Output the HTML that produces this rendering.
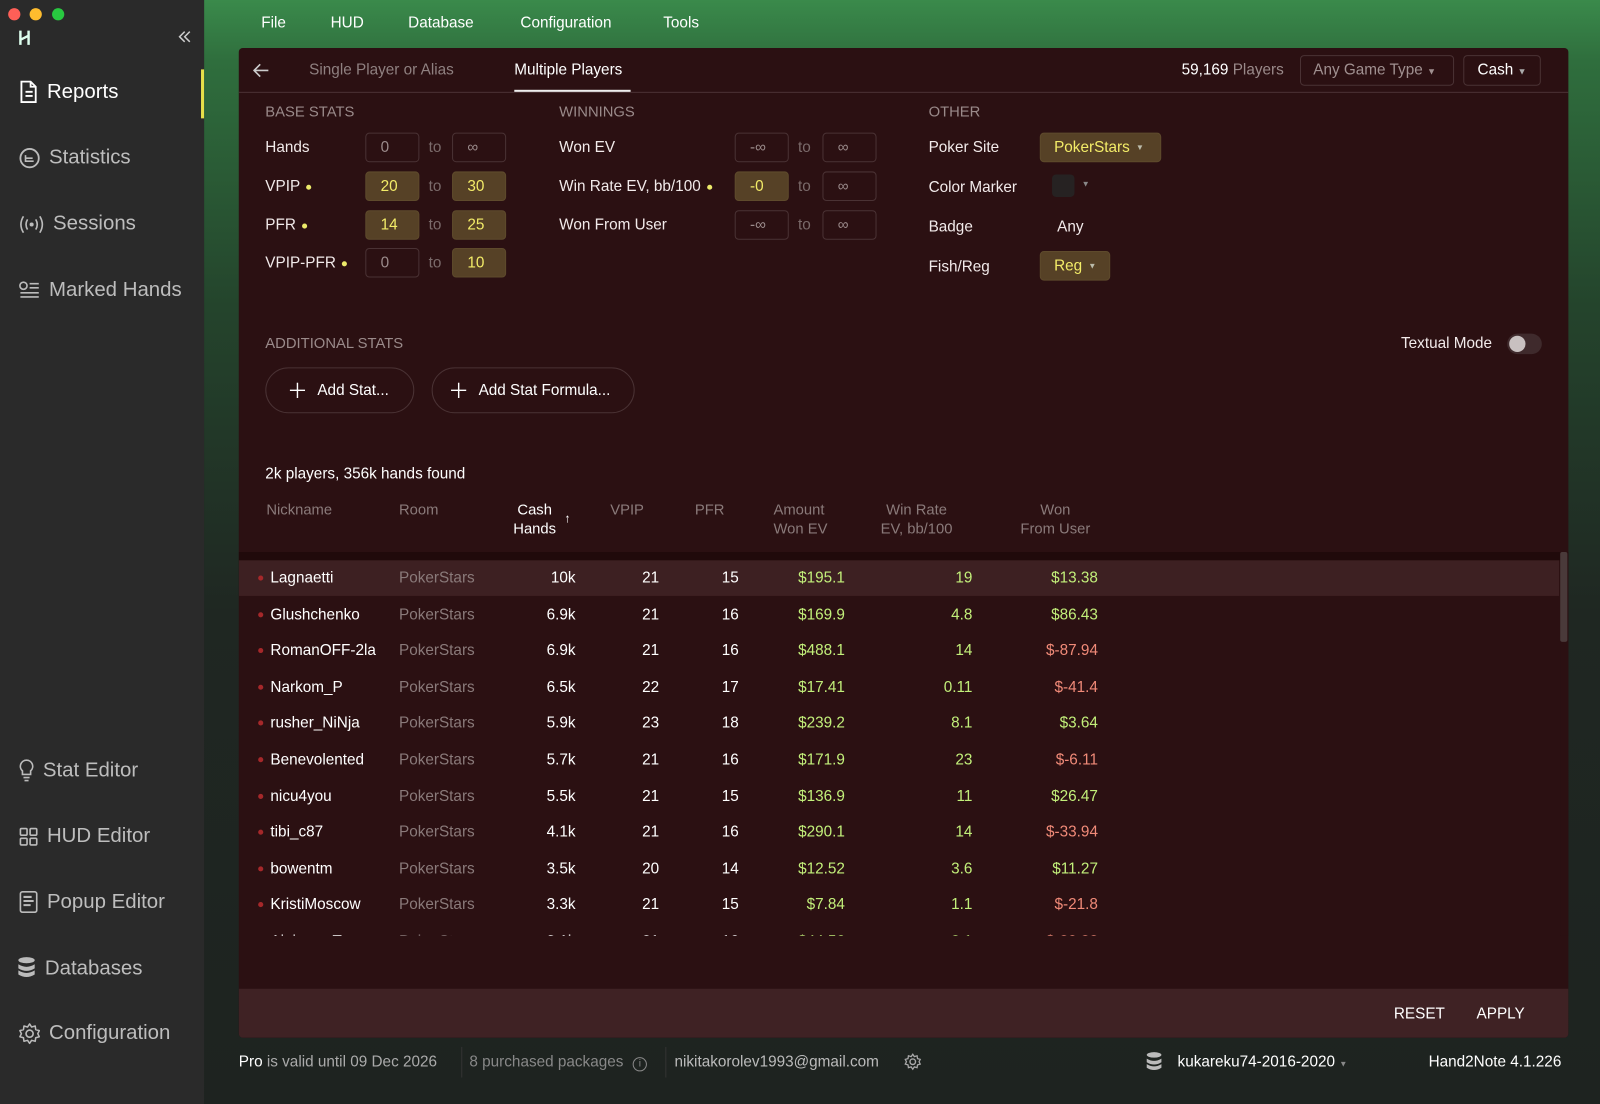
<!DOCTYPE html>
<html><head><meta charset="utf-8">
<style>
*{margin:0;padding:0;box-sizing:border-box}
body{width:1600px;height:1082px;overflow:hidden;font-family:"Liberation Sans",sans-serif;background:#1e2320;position:relative;color:#fff}
#wrap{position:absolute;left:0;top:0;width:1568px;height:1060px;transform:scale(1.020408);transform-origin:0 0}
.abs{position:absolute;white-space:nowrap}
#side{position:absolute;left:0;top:0;width:200px;height:1082px;background:#2a2a2a}
#topbg{position:absolute;left:200px;top:0;width:1400px;height:1082px;background:linear-gradient(180deg,#3a8a4b 0px,#2f6e3d 60px,#24442c 300px,#1f2722 600px,#1e2320 1082px)}
.nav{position:absolute;left:18px;font-size:20px;color:#bdbdbd;display:flex;align-items:center;gap:8px}
.nav svg{flex:none}
#panel{position:absolute;left:234px;top:47px;width:1303px;height:970px;background:#2b1012;border-radius:4px;overflow:hidden}
.lbl{font-size:15px;color:#f2eaea}
.sec{font-size:14.5px;color:#9a8a8a}
.box{position:absolute;height:29px;border:1px solid #4a3234;border-radius:4px;font-size:15px;color:#9b8b8b;display:flex;align-items:center;padding-left:14px}
.box.y{background:#564126;border-color:#5e4a2c;color:#f3ec68}
.to{position:absolute;font-size:15px;color:#7a6a6a}
.dot{display:inline-block;width:5px;height:5px;border-radius:50%;background:#ecea6a;margin-left:6px;vertical-align:middle}
.th{position:absolute;font-size:14.5px;color:#8a7a7a;line-height:19px}
.row{position:absolute;left:0;width:1294px;height:35px;font-size:15px}
.row span{position:absolute;top:9px}
.g{color:#c2ef7a}.r{color:#f08a78}
.menu{position:absolute;top:14px;font-size:15px;color:#fff}
.btn{position:absolute;top:313px;height:45px;border:1px solid #4a3234;border-radius:23px;font-size:15px;display:flex;align-items:center;gap:12px}
</style></head><body>
<div id="wrap">
<div id="topbg"></div>
<div id="side">
  <div class="abs" style="left:8px;top:8px;width:12px;height:12px;border-radius:50%;background:#fe5f57"></div>
  <div class="abs" style="left:29px;top:8px;width:12px;height:12px;border-radius:50%;background:#febc2e"></div>
  <div class="abs" style="left:51px;top:8px;width:12px;height:12px;border-radius:50%;background:#28c840"></div>
  <svg class="abs" style="left:18px;top:29px" width="12" height="16" viewBox="0 0 12 16"><path d="M2 1v14M10 1v14M2 10l8-4" stroke="#dfe" stroke-width="2.4" fill="none"/></svg>
  <svg class="abs" style="left:174px;top:30px" width="14" height="12" viewBox="0 0 14 12"><path d="M7 1L2 6l5 5M12 1L7 6l5 5" stroke="#ccc" stroke-width="1.5" fill="none"/></svg>
  <div class="abs" style="left:197px;top:68px;width:3px;height:48px;background:#e6e04a"></div>
  <div class="nav" style="top:78px;color:#fff"><svg width="20" height="24" viewBox="0 0 20 24"><path d="M3 2h9l5 5v15H3z M12 2v5h5 M7 12h7 M7 16h7" stroke="#fff" stroke-width="1.8" fill="none"/></svg>Reports</div>
  <div class="nav" style="top:143px"><svg width="22" height="22" viewBox="0 0 22 22"><circle cx="11" cy="11" r="9" stroke="#bbb" stroke-width="1.8" fill="none"/><path d="M7 8v6h8M7 11h7" stroke="#bbb" stroke-width="1.6" fill="none"/></svg>Statistics</div>
  <div class="nav" style="top:208px"><svg width="26" height="20" viewBox="0 0 26 20"><circle cx="13" cy="10" r="2" fill="#bbb"/><path d="M9 5q-3 5 0 10M17 5q3 5 0 10M5 2q-5 8 0 16M21 2q5 8 0 16" stroke="#bbb" stroke-width="1.6" fill="none"/></svg>Sessions</div>
  <div class="nav" style="top:273px"><svg width="22" height="20" viewBox="0 0 22 20"><circle cx="5" cy="5" r="3.5" stroke="#bbb" stroke-width="1.6" fill="none"/><path d="M11 3h9M11 7h9M2 12h18M2 16h18" stroke="#bbb" stroke-width="1.6"/></svg>Marked Hands</div>
  <div class="nav" style="top:743px"><svg width="16" height="24" viewBox="0 0 16 24"><path d="M8 2a6 6 0 0 0-4 10.5V16h8v-3.5A6 6 0 0 0 8 2zM5 19h6M6 22h4" stroke="#bbb" stroke-width="1.6" fill="none"/></svg>Stat Editor</div>
  <div class="nav" style="top:808px"><svg width="20" height="20" viewBox="0 0 20 20"><rect x="2" y="2" width="6.5" height="6.5" rx="1" stroke="#bbb" stroke-width="1.6" fill="none"/><rect x="11.5" y="2" width="6.5" height="6.5" rx="1" stroke="#bbb" stroke-width="1.6" fill="none"/><rect x="2" y="11.5" width="6.5" height="6.5" rx="1" stroke="#bbb" stroke-width="1.6" fill="none"/><rect x="11.5" y="11.5" width="6.5" height="6.5" rx="1" stroke="#bbb" stroke-width="1.6" fill="none"/></svg>HUD Editor</div>
  <div class="nav" style="top:872px"><svg width="20" height="24" viewBox="0 0 20 24"><rect x="2" y="2" width="16" height="20" rx="2" stroke="#bbb" stroke-width="1.6" fill="none"/><path d="M5 7h8M5 11h10M5 15h7" stroke="#bbb" stroke-width="2"/></svg>Popup Editor</div>
  <div class="nav" style="top:937px;left:16px"><svg width="20" height="24" viewBox="0 0 20 24"><ellipse cx="10" cy="4" rx="8" ry="3" fill="#bbb"/><path d="M2 8q8 5 16 0v4q-8 5-16 0zM2 14q8 5 16 0v4q-8 5-16 0z" fill="#bbb"/></svg>Databases</div>
  <div class="nav" style="top:1001px"><svg width="22" height="22" viewBox="0 0 22 22"><circle cx="11" cy="11" r="3.5" stroke="#bbb" stroke-width="1.6" fill="none"/><path d="M11 1.5l2 3 3.5-1 .5 3.5 3.5 1-1.5 3 1.5 3-3.5 1-.5 3.5-3.5-1-2 3-2-3-3.5 1-.5-3.5-3.5-1 1.5-3-1.5-3 3.5-1 .5-3.5 3.5 1z" stroke="#bbb" stroke-width="1.5" fill="none" stroke-linejoin="round"/></svg>Configuration</div>
</div>
<div class="menu" style="left:256px">File</div>
<div class="menu" style="left:324px">HUD</div>
<div class="menu" style="left:400px">Database</div>
<div class="menu" style="left:510px">Configuration</div>
<div class="menu" style="left:650px">Tools</div>

<div id="panel">
  <div class="abs" style="left:0;top:43px;width:1303px;height:1px;background:#4a3234"></div>
  <svg class="abs" style="left:14px;top:15px" width="16" height="14" viewBox="0 0 16 14"><path d="M15 7H2M7 1L1 7l6 6" stroke="#ccc" stroke-width="1.6" fill="none"/></svg>
  <div class="abs" style="left:69px;top:13px;font-size:15px;color:#8f8080">Single Player or Alias</div>
  <div class="abs" style="left:270px;top:13px;font-size:15px;color:#fff">Multiple Players</div>
  <div class="abs" style="left:270px;top:41px;width:114px;height:2px;background:#eee"></div>
  <div class="abs" style="left:924px;top:13px;font-size:15px"><span style="color:#fff">59,169</span> <span style="color:#9a8a8a">Players</span></div>
  <div class="abs" style="left:1040px;top:7px;width:151px;height:30px;border:1px solid #4a3234;border-radius:4px;font-size:15px;color:#a09090;padding:5px 0 0 12px">Any Game Type <span style="font-size:9px">▼</span></div>
  <div class="abs" style="left:1200px;top:7px;width:76px;height:30px;border:1px solid #4a3234;border-radius:4px;font-size:15px;color:#fff;padding:5px 0 0 13px">Cash <span style="font-size:9px;color:#aaa">▼</span></div>

  <div class="abs sec" style="left:26px;top:55px">BASE STATS</div>
  <div class="abs sec" style="left:314px;top:55px">WINNINGS</div>
  <div class="abs sec" style="left:676px;top:55px">OTHER</div>

  <div class="abs lbl" style="left:26px;top:89px">Hands</div>
  <div class="abs lbl" style="left:26px;top:127px">VPIP<span class="dot"></span></div>
  <div class="abs lbl" style="left:26px;top:165px">PFR<span class="dot"></span></div>
  <div class="abs lbl" style="left:26px;top:202px">VPIP-PFR<span class="dot"></span></div>
  <div class="box" style="left:124px;top:83px;width:53px">0</div><div class="to" style="left:186px;top:89px">to</div><div class="box" style="left:209px;top:83px;width:53px">∞</div>
  <div class="box y" style="left:124px;top:121px;width:53px">20</div><div class="to" style="left:186px;top:127px">to</div><div class="box y" style="left:209px;top:121px;width:53px">30</div>
  <div class="box y" style="left:124px;top:159px;width:53px">14</div><div class="to" style="left:186px;top:165px">to</div><div class="box y" style="left:209px;top:159px;width:53px">25</div>
  <div class="box" style="left:124px;top:196px;width:53px">0</div><div class="to" style="left:186px;top:202px">to</div><div class="box y" style="left:209px;top:196px;width:53px">10</div>

  <div class="abs lbl" style="left:314px;top:89px">Won EV</div>
  <div class="abs lbl" style="left:314px;top:127px">Win Rate EV, bb/100<span class="dot"></span></div>
  <div class="abs lbl" style="left:314px;top:165px">Won From User</div>
  <div class="box" style="left:486px;top:83px;width:53px">-∞</div><div class="to" style="left:548px;top:89px">to</div><div class="box" style="left:572px;top:83px;width:53px">∞</div>
  <div class="box y" style="left:486px;top:121px;width:53px">-0</div><div class="to" style="left:548px;top:127px">to</div><div class="box" style="left:572px;top:121px;width:53px">∞</div>
  <div class="box" style="left:486px;top:159px;width:53px">-∞</div><div class="to" style="left:548px;top:165px">to</div><div class="box" style="left:572px;top:159px;width:53px">∞</div>

  <div class="abs lbl" style="left:676px;top:89px">Poker Site</div>
  <div class="abs lbl" style="left:676px;top:128px">Color Marker</div>
  <div class="abs lbl" style="left:676px;top:167px">Badge</div>
  <div class="abs lbl" style="left:676px;top:206px">Fish/Reg</div>
  <div class="box y" style="left:785px;top:83px;width:119px;padding-left:13px">PokerStars <span style="font-size:8px;color:#bba;margin-left:6px">▼</span></div>
  <div class="abs" style="left:797px;top:124px;width:22px;height:22px;border-radius:4px;background:#262222"></div>
  <div class="abs" style="left:826px;top:129px;font-size:8px;color:#888">▼</div>
  <div class="abs lbl" style="left:802px;top:167px">Any</div>
  <div class="box y" style="left:785px;top:199px;width:69px;padding-left:13px">Reg <span style="font-size:8px;color:#bba;margin-left:6px">▼</span></div>

  <div class="abs sec" style="left:26px;top:282px">ADDITIONAL STATS</div>
  <div class="abs lbl" style="left:1139px;top:281px">Textual Mode</div>
  <div class="abs" style="left:1243px;top:280px;width:34px;height:20px;border-radius:10px;background:#3f2a2c"></div>
  <div class="abs" style="left:1245px;top:282px;width:16px;height:16px;border-radius:50%;background:#c8c0c0"></div>
  <div class="btn" style="left:26px;width:146px;padding-left:23px"><svg width="15" height="15" viewBox="0 0 15 15"><path d="M7.5 0v15M0 7.5h15" stroke="#fff" stroke-width="1.4"/></svg>Add Stat...</div>
  <div class="btn" style="left:189px;width:199px;padding-left:18px"><svg width="15" height="15" viewBox="0 0 15 15"><path d="M7.5 0v15M0 7.5h15" stroke="#fff" stroke-width="1.4"/></svg>Add Stat Formula...</div>

  <div class="abs" style="left:26px;top:409px;font-size:15px">2k players, 356k hands found</div>
  <div class="th" style="left:27px;top:444px">Nickname</div>
  <div class="th" style="left:157px;top:444px">Room</div>
  <div class="th" style="left:269px;top:444px;color:#fff;text-align:center">Cash<br>Hands</div>
  <div class="abs" style="left:319px;top:454px;font-size:12px">↑</div>
  <div class="th" style="left:364px;top:444px">VPIP</div>
  <div class="th" style="left:447px;top:444px">PFR</div>
  <div class="th" style="left:524px;top:444px">Amount<br>Won EV</div>
  <div class="th" style="left:629px;top:444px;text-align:center">Win Rate<br>EV, bb/100</div>
  <div class="th" style="left:766px;top:444px;text-align:center">Won<br>From User</div>
  <div class="abs" style="left:0;top:494px;width:1303px;height:8px;background:#200a0b"></div>
  <div class="abs" style="left:1295px;top:494px;width:8px;height:376px;background:#2b1012"></div>
  <div class="abs" style="left:1295px;top:494px;width:7px;height:88px;background:#4a3a3a;border-radius:2px"></div>
  <div id="rows" class="abs" style="left:0;top:502px;width:1294px;height:368px;overflow:hidden"></div>

  <div class="abs" style="left:0;top:922px;width:1303px;height:48px;background:#3f2224"></div>
  <div class="abs" style="left:1132px;top:938px;font-size:15px">RESET</div>
  <div class="abs" style="left:1213px;top:938px;font-size:15px">APPLY</div>
</div>

<div class="abs" style="left:234px;top:1032px;font-size:15px;color:#fff">Pro <span style="color:#aaa">is valid until 09 Dec 2026</span></div>
<div class="abs" style="left:452px;top:1026px;width:1px;height:30px;background:#333"></div>
<div class="abs" style="left:460px;top:1032px;font-size:15px;color:#888">8 purchased packages <span style="display:inline-block;width:14px;height:14px;border:1px solid #888;border-radius:50%;font-size:10px;text-align:center;line-height:12px;margin-left:5px">i</span></div>
<div class="abs" style="left:652px;top:1026px;width:1px;height:30px;background:#333"></div>
<div class="abs" style="left:661px;top:1032px;font-size:15px;color:#bbb">nikitakorolev1993@gmail.com</div>
<svg class="abs" style="left:886px;top:1032px" width="17" height="17" viewBox="0 0 22 22"><circle cx="11" cy="11" r="3.5" stroke="#aaa" stroke-width="1.8" fill="none"/><path d="M11 1.5l2 3 3.5-1 .5 3.5 3.5 1-1.5 3 1.5 3-3.5 1-.5 3.5-3.5-1-2 3-2-3-3.5 1-.5-3.5-3.5-1 1.5-3-1.5-3 3.5-1 .5-3.5 3.5 1z" stroke="#aaa" stroke-width="1.6" fill="none"/></svg>
<svg class="abs" style="left:1122px;top:1030px" width="18" height="22" viewBox="0 0 20 24"><ellipse cx="10" cy="4" rx="8" ry="3" fill="#bbb"/><path d="M2 8q8 5 16 0v4q-8 5-16 0zM2 14q8 5 16 0v4q-8 5-16 0z" fill="#bbb"/></svg>
<div class="abs" style="left:1154px;top:1032px;font-size:15px;color:#fff">kukareku74-2016-2020 <span style="font-size:8px;color:#888">▼</span></div>
<div class="abs" style="left:1400px;top:1032px;font-size:15px;color:#fff">Hand2Note 4.1.226</div>
</div>
<script>
var d=[["Lagnaetti","10k",21,15,"$195.1","19","$13.38"],["Glushchenko","6.9k",21,16,"$169.9","4.8","$86.43"],["RomanOFF-2la","6.9k",21,16,"$488.1","14","$-87.94"],["Narkom_P","6.5k",22,17,"$17.41","0.11","$-41.4"],["rusher_NiNja","5.9k",23,18,"$239.2","8.1","$3.64"],["Benevolented","5.7k",21,16,"$171.9","23","$-6.11"],["nicu4you","5.5k",21,15,"$136.9","11","$26.47"],["tibi_c87","4.1k",21,16,"$290.1","14","$-33.94"],["bowentm","3.5k",20,14,"$12.52","3.6","$11.27"],["KristiMoscow","3.3k",21,15,"$7.84","1.1","$-21.8"],["Aleksey_T","3.1k",21,16,"$44.56","2.1","$-20.22"]];
var h="";d.forEach(function(r,i){var top=i*35.6;h+='<div class="row" style="top:'+top+'px;'+(i==0?'background:#3d2022':'')+'">'+
'<span style="left:19px;top:15px;width:5px;height:5px;border-radius:50%;background:#a5282a"></span>'+
'<span style="left:31px">'+r[0]+'</span><span style="left:157px;color:#8a7a7a">PokerStars</span>'+
'<span style="right:'+(1294-330)+'px">'+r[1]+'</span><span style="right:'+(1294-412)+'px">'+r[2]+'</span><span style="right:'+(1294-490)+'px">'+r[3]+'</span>'+
'<span class="g" style="right:'+(1294-594)+'px">'+r[4]+'</span><span class="g" style="right:'+(1294-719)+'px">'+r[5]+'</span>'+
'<span class="'+(r[6].indexOf("-")>0?"r":"g")+'" style="right:'+(1294-842)+'px">'+r[6]+'</span></div>';});
document.getElementById("rows").innerHTML=h;
</script>
</body></html>
